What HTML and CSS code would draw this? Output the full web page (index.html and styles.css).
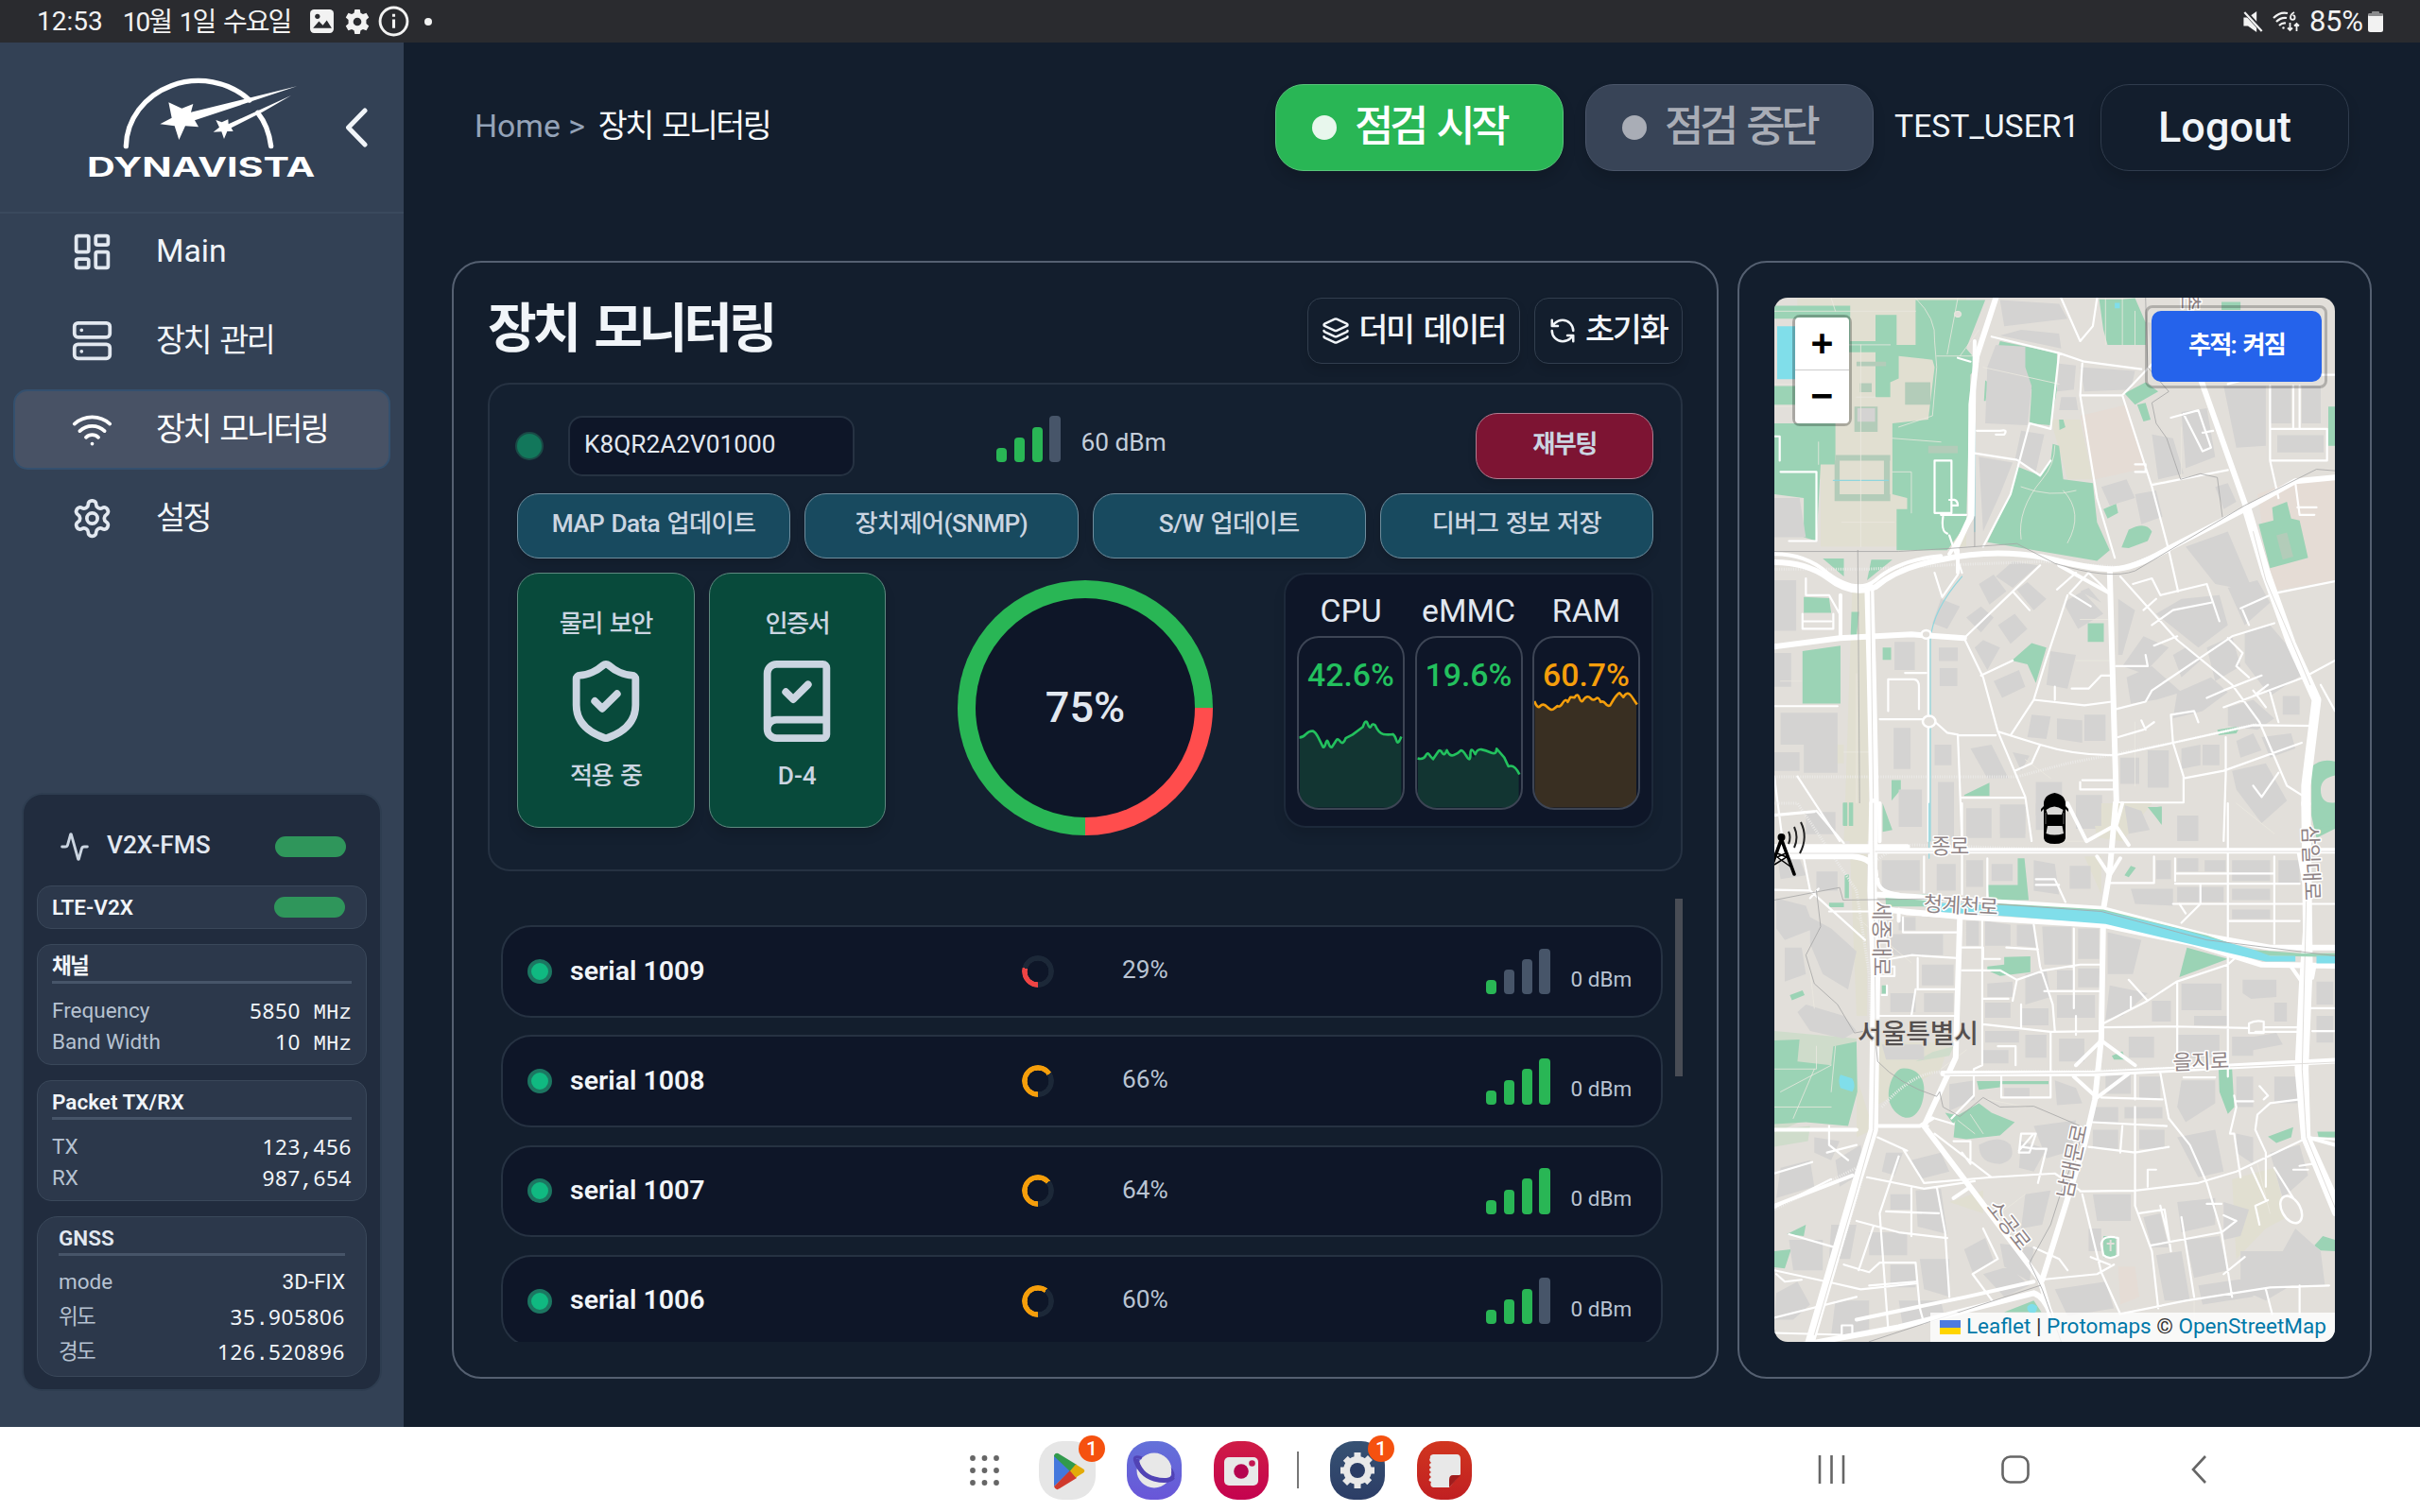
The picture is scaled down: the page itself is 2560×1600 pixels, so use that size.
FILE: index.html
```html
<!DOCTYPE html>
<html lang="ko">
<head>
<meta charset="utf-8">
<title>장치 모니터링</title>
<link rel="stylesheet" href="styles.css">
</head>
<body>
<div class="statusbar">
  <div class="status-left">
    <span class="clock">12:53</span>
    <span class="date ko">10월 1일 수요일</span>
    <svg class="st-pic" viewBox="0 0 26 26"><rect x="1" y="1" width="24" height="24" rx="4" fill="#f2f2f2"/><path d="M4 20l6-7 4 4 4-5 5 8z" fill="#2a2b2f"/><circle cx="8.500" cy="8" r="2.500" fill="#2a2b2f"/></svg>
    <svg class="st-gear" viewBox="0 0 24 24"><path fill="#f2f2f2" fill-rule="evenodd" d="M9.500 0h5l.7 3.400 2.300 1.300 3.300-1.200 2.500 4.300-2.600 2.300v3.800l2.600 2.300-2.500 4.300-3.300-1.200-2.300 1.300-.7 3.400h-5l-.7-3.400-2.300-1.300-3.300 1.200L.7 16.200l2.600-2.300v-3.800L.7 7.800l2.500-4.300 3.300 1.200 2.300-1.300zM12 8a4 4 0 1 0 0 8 4 4 0 0 0 0-8z"/></svg>
    <svg class="st-info" viewBox="0 0 32 32" fill="none" stroke="#f2f2f2"><circle cx="16" cy="16" r="14" stroke-width="2.800"/><path d="M16 14v9M16 8.500v3" stroke-width="3"/></svg>
    <span class="st-dot"></span>
  </div>
  <div class="status-right">
    <svg class="st-mute" viewBox="0 0 24 24"><path fill="#f2f2f2" d="M1 7h5l10-7v24L6 17H1z"/><path d="M2 0l21 23" stroke="#2a2b2f" stroke-width="5"/><path d="M2 1l20 22" stroke="#f2f2f2" stroke-width="2.400"/></svg>
    <svg class="st-wifi" viewBox="0 0 30 22" fill="none" stroke="#f2f2f2" stroke-width="2.200"><path d="M1 7Q8 0 16 2M4 11Q9 6 15 7M7 15Q10 12 14 12.500"/><circle cx="11.500" cy="17.500" r="1.200" fill="#f2f2f2" stroke="none"/><path d="M23 1q-4 2-4 5.500a2.300 2.300 0 1 0 2.300-2.300" stroke-width="1.800"/><path d="M18.500 12v8M16 17.500l2.500 2.500 2.500-2.500M25.500 21v-8M23 15.500l2.500-2.500 2.500 2.500" stroke-width="1.800"/></svg>
    <span class="battery-text">85%</span>
    <svg class="st-batt" viewBox="0 0 16 22"><rect x="4" y="0" width="8" height="4" rx="1" fill="#8a8b8d"/><rect x="0" y="2" width="16" height="20" rx="2.500" fill="#f2f2f2"/><rect x="0" y="2" width="16" height="3" rx="1.500" fill="#8a8b8d"/></svg>
  </div>
</div>

<div class="app">
  <aside class="sidebar">
    <div class="brand">
      <svg class="logo" viewBox="0 0 960 390">
        <path d="M160 254A230 212 0 0 1 552 108M578 148Q612 190 620 254" fill="none" stroke="#fff" stroke-width="16" stroke-linecap="round"/>
        <path d="M295 115L337 134 373 120 366 146 702 64 378 172 390 193 348 190 328 234 314 190 268 184 305 164z" fill="#fff"/>
        <path d="M445 171L464 178 484 169 485 184 684 93 592 146 494 196 500 207 481 207 471 231 463 208 437 209 456 194z" fill="#fff"/>
        <text class="logo-text" x="36" y="352" textLength="724" lengthAdjust="spacingAndGlyphs">DYNAVISTA</text>
      </svg>
      <svg class="chevron" viewBox="0 0 24 42"><path d="M21.500 3L4 21l17.500 18" fill="none" stroke="#f1f5f9" stroke-width="5" stroke-linecap="round" stroke-linejoin="round"/></svg>
    </div>
    <nav class="nav">
      <a class="nav-item"><svg class="icon" viewBox="0 0 24 24"><rect width="7" height="9" x="3" y="3" rx="1"/><rect width="7" height="5" x="14" y="3" rx="1"/><rect width="7" height="9" x="14" y="12" rx="1"/><rect width="7" height="5" x="3" y="16" rx="1"/></svg><span>Main</span></a>
      <a class="nav-item"><svg class="icon" viewBox="0 0 24 24"><rect width="20" height="8" x="2" y="2" rx="2"/><rect width="20" height="8" x="2" y="14" rx="2"/><path d="M6 6h.01M6 18h.01"/></svg><span class="ko">장치 관리</span></a>
      <a class="nav-item active"><svg class="icon" viewBox="0 0 24 24"><path d="M12 20h.01M2 8.820a15 15 0 0 1 20 0M5 12.859a10 10 0 0 1 14 0M8.500 16.429a5 5 0 0 1 7 0"/></svg><span class="ko">장치 모니터링</span></a>
      <a class="nav-item"><svg class="icon" viewBox="0 0 24 24"><path d="M12.220 2h-.44a2 2 0 0 0-2 2v.18a2 2 0 0 1-1 1.730l-.43.25a2 2 0 0 1-2 0l-.15-.08a2 2 0 0 0-2.730.73l-.22.38a2 2 0 0 0 .73 2.730l.15.1a2 2 0 0 1 1 1.720v.51a2 2 0 0 1-1 1.740l-.15.09a2 2 0 0 0-.73 2.730l.22.38a2 2 0 0 0 2.730.73l.15-.08a2 2 0 0 1 2 0l.43.25a2 2 0 0 1 1 1.730V20a2 2 0 0 0 2 2h.44a2 2 0 0 0 2-2v-.18a2 2 0 0 1 1-1.730l.43-.25a2 2 0 0 1 2 0l.15.08a2 2 0 0 0 2.730-.73l.22-.39a2 2 0 0 0-.73-2.730l-.15-.08a2 2 0 0 1-1-1.740v-.5a2 2 0 0 1 1-1.740l.15-.09a2 2 0 0 0 .73-2.730l-.22-.38a2 2 0 0 0-2.730-.73l-.15.08a2 2 0 0 1-2 0l-.43-.25a2 2 0 0 1-1-1.730V4a2 2 0 0 0-2-2z"/><circle cx="12" cy="12" r="3"/></svg><span class="ko">설정</span></a>
    </nav>
    <section class="fms">
      <div class="fms-head"><svg class="pulse" viewBox="0 0 24 24"><path d="M22 12h-2.480a2 2 0 0 0-1.930 1.460l-2.350 8.360a.25.25 0 0 1-.48 0L9.240 2.180a.25.25 0 0 0-.48 0l-2.350 8.360A2 2 0 0 1 4.490 12H2"/></svg><span>V2X-FMS</span><i class="pill"></i></div>
      <div class="fms-box lte"><span>LTE-V2X</span><i class="pill"></i></div>
      <div class="fms-box">
        <h4 class="ko">채널</h4>
        <div class="kv"><span>Frequency</span><b>5850<i> MHz</i></b></div>
        <div class="kv"><span>Band Width</span><b>10<i> MHz</i></b></div>
      </div>
      <div class="fms-box">
        <h4>Packet TX/RX</h4>
        <div class="kv"><span>TX</span><b>123<i>,</i>456</b></div>
        <div class="kv"><span>RX</span><b>987<i>,</i>654</b></div>
      </div>
      <div class="fms-box gnss">
        <h4>GNSS</h4>
        <div class="kv"><span>mode</span><em>3D-FIX</em></div>
        <div class="kv"><span class="ko">위도</span><b>35<i>.</i>905806</b></div>
        <div class="kv"><span class="ko">경도</span><b>126<i>.</i>520896</b></div>
      </div>
    </section>
  </aside>

  <main class="main">
    <header class="header">
      <div class="crumbs"><span>Home &gt;</span><strong class="ko">장치 모니터링</strong></div>
      <button class="hbtn start"><i></i><span class="ko">점검 시작</span></button>
      <button class="hbtn stop"><i></i><span class="ko">점검 중단</span></button>
      <span class="user">TEST_USER1</span>
      <button class="hbtn logout"><span>Logout</span></button>
    </header>

    <div class="content">
      <section class="card monitor">
        <div class="title-row">
          <h1 class="ko">장치 모니터링</h1>
          <button class="tool"><svg class="icon-s" viewBox="0 0 24 24"><path d="M12.830 2.180a2 2 0 0 0-1.660 0L2.600 6.080a1 1 0 0 0 0 1.830l8.580 3.910a2 2 0 0 0 1.660 0l8.580-3.900a1 1 0 0 0 0-1.830z"/><path d="M2 12a1 1 0 0 0 .58.910l8.600 3.910a2 2 0 0 0 1.650 0l8.580-3.900A1 1 0 0 0 22 12M2 17a1 1 0 0 0 .58.910l8.600 3.910a2 2 0 0 0 1.650 0l8.580-3.900A1 1 0 0 0 22 17"/></svg><span class="ko">더미 데이터</span></button>
          <button class="tool"><svg class="icon-s" viewBox="0 0 24 24"><path d="M21 12a9 9 0 0 0-9-9 9.750 9.750 0 0 0-6.740 2.740L3 8M3 3v5h5M3 12a9 9 0 0 0 9 9 9.750 9.750 0 0 0 6.740-2.740L21 16M16 16h5v5"/></svg><span class="ko">초기화</span></button>
        </div>

        <div class="device">
          <div class="dev-top">
            <i class="dev-dot"></i>
            <div class="dev-input">K8QR2A2V01000</div>
            <div class="bars"><i class="on"></i><i class="on"></i><i class="on"></i><i></i></div>
            <span class="dbm">60 dBm</span>
            <button class="btn reboot ko">재부팅</button>
          </div>
          <div class="dev-actions">
            <button class="btn ko">MAP Data 업데이트</button>
            <button class="btn ko">장치제어(SNMP)</button>
            <button class="btn ko">S/W 업데이트</button>
            <button class="btn ko">디버그 정보 저장</button>
          </div>
          <div class="dev-bottom">
            <div class="tile"><span class="ko">물리 보안</span><svg viewBox="0 0 24 24"><path d="M20 13c0 5-3.500 7.500-7.660 8.950a1 1 0 0 1-.67-.01C7.500 20.500 4 18 4 13V6a1 1 0 0 1 1-1c2 0 4.500-1.200 6.240-2.720a1.170 1.170 0 0 1 1.520 0C14.510 3.810 17 5 19 5a1 1 0 0 1 1 1z"/><path d="m9 12 2 2 4-4"/></svg><span class="ko">적용 중</span></div>
            <div class="tile"><span class="ko">인증서</span><svg viewBox="0 0 24 24"><path d="M4 19.500v-15A2.500 2.500 0 0 1 6.500 2H19a1 1 0 0 1 1 1v18a1 1 0 0 1-1 1H6.500a1 1 0 0 1 0-5H20"/><path d="m9 9.500 2 2 4-4"/></svg><span>D-4</span></div>
            <div class="ring"><div>75%</div></div>
            <div class="stats">
              <div class="stat"><h5>CPU</h5><div class="gauge green"><span>42.6%</span>
                <svg viewBox="204 960 314 432" preserveAspectRatio="none"><path class="fill" d="M212 1212L228 1207 240 1197 250 1196 262 1208 280 1236 292 1222 304 1238 322 1216 334 1224 344 1214 364 1206 394 1188 405 1170 416 1184 426 1175 440 1196 458 1204 484 1204 498 1222 508 1210V1386H212z"/><path class="line" d="M211 1212Q222 1212 230 1204T250 1196Q258 1199 266 1212L280 1236Q284 1238 288 1226T296 1226T306 1236L318 1220Q322 1212 330 1222T346 1214L366 1205 396 1186Q404 1164 410 1178T420 1184T432 1182Q442 1202 456 1204T484 1204Q490 1208 494 1220T508 1210"/></svg></div></div>
              <div class="stat"><h5>eMMC</h5><div class="gauge green"><span>19.6%</span>
                <svg viewBox="554 960 312 432" preserveAspectRatio="none"><path class="fill" d="M562 1264L580 1262 592 1252 602 1266 622 1246 642 1240 654 1256 666 1256 686 1246 702 1256 712 1252 724 1262 740 1242 776 1250 788 1238 826 1284 840 1284 854 1302V1386H562z"/><path class="line" d="M561 1264Q578 1268 584 1258T594 1254T606 1266L620 1248Q626 1240 632 1250T646 1244Q654 1260 666 1256T684 1246T702 1258T714 1254T728 1254Q734 1240 746 1242T774 1250T790 1240L812 1262 824 1284Q842 1278 856 1304"/></svg></div></div>
              <div class="stat"><h5>RAM</h5><div class="gauge amber"><span>60.7%</span>
                <svg viewBox="901 960 314 432" preserveAspectRatio="none"><path class="fill" d="M908 1124L920 1138 930 1130 960 1144 998 1126 1032 1108 1046 1122 1064 1112 1090 1124 1098 1116 1124 1136 1152 1098 1166 1110 1178 1104 1204 1130V1386H908z"/><path class="line" d="M907 1122Q916 1142 924 1134T944 1136T962 1142L974 1134Q982 1138 990 1126T1004 1124L1012 1112 1024 1113Q1032 1100 1038 1114T1050 1118Q1062 1106 1070 1114T1086 1116T1100 1124Q1108 1120 1114 1128T1128 1132Q1138 1116 1146 1108T1156 1102T1166 1112Q1178 1094 1190 1110L1206 1130"/></svg></div></div>
            </div>
          </div>
        </div>

        <div class="list-wrap">
          <div class="list">
            <div class="item"><i class="dot"></i><span class="serial">serial 1009</span><i class="mini red" style="--p:29%"></i><span class="pct">29%</span><div class="bars"><i class="on"></i><i></i><i></i><i></i></div><span class="zero">0 dBm</span></div>
            <div class="item"><i class="dot"></i><span class="serial">serial 1008</span><i class="mini" style="--p:66%"></i><span class="pct">66%</span><div class="bars"><i class="on"></i><i class="on"></i><i class="on"></i><i class="on"></i></div><span class="zero">0 dBm</span></div>
            <div class="item"><i class="dot"></i><span class="serial">serial 1007</span><i class="mini" style="--p:64%"></i><span class="pct">64%</span><div class="bars"><i class="on"></i><i class="on"></i><i class="on"></i><i class="on"></i></div><span class="zero">0 dBm</span></div>
            <div class="item"><i class="dot"></i><span class="serial">serial 1006</span><i class="mini" style="--p:60%"></i><span class="pct">60%</span><div class="bars"><i class="on"></i><i class="on"></i><i class="on"></i><i></i></div><span class="zero">0 dBm</span></div>
          </div>
          <div class="thumb"></div>
        </div>
      </section>

      <section class="card mapcard">
        <div class="map">
          <svg class="tiles" viewBox="0 0 593 1105">
            <!-- northern half -->
            <g transform="translate(-47 -45) scale(.4464 .3954)">
              <path class="sand" d="M250 115H560V780H215V600H160V115zM290 890H330V1568H270zM210 1310h60v50h-60zM760 440L830 440 860 600 800 600z"/>
              <path class="pink" d="M830 430L940 400 985 570 865 600zM1340 600H1434V870L1285 900 1250 640z"/>
              <path class="green" d="M105 135H285V230H345V160H395V240H440V120H605L560 250 590 290 570 320 560 720 515 790 395 790V680H420V650L385 640V450L470 440 485 300 480 280 400 270V330L380 340V380H345V260H270V330H155V170H105zM105 350H155V400H105zM105 450H250V560H215L205 765 175 755V650L105 640zM640 230L775 262V360L760 455 710 450 715 360 680 310 620 300zM605 335L612 340 606 390H602zM765 505L780 510 790 600 860 610 870 715 900 790 870 818 610 768 665 640 680 565 735 590 760 550zM875 118H930L960 115 985 180V240H895L885 200zM935 370L985 340 1015 365 960 400zM965 400L985 395 997 440 980 445zM928 782L945 735Q985 710 1000 740L990 765 945 784zM885 680L915 665 920 690 895 705zM1285 675L1320 660 1330 705 1350 710 1370 810 1280 838 1253 720 1288 710zM848 985H886V1035H848zM668 1085L715 1038 750 1050 725 1145 705 1095zM362 1050H382V1083H362zM175 915L235 918 240 957H175zM288 955H306L300 1020H286zM172 1060L262 1045V1200H172zM555 1445L615 1412V1447H555zM1155 1270L1210 1260 1200 1280 1158 1285zM1378 1370Q1400 1345 1434 1355V1392Q1400 1400 1400 1430 1400 1470 1434 1465V1535L1390 1560 1378 1500zM383 1405H405V1430L383 1460zM268 1465h10v60h-10zM282 1465h10v60h-10zM995 1480L1023 1475V1525zM335 815H385L325 870zM220 812H270V860zM780 440l10 0 5 20-14 8zM1418 405h16v105h-16zM1165 125h45v22h-45z"/>
              <path class="green2" d="M250 270H270V380H250zM300 285h70v12h-70zM295 405h55v68h-55zM250 535H380V550H250zM248 640H380V658H248zM365 550h14v100h-14zM248 550h12v100h-12zM308 343h28v24h-28zM415 340h60v60h-60zM470 510h70v20h-70zM1295 750l25-8 15 65-25 8z"/>
              <path class="bldg" d="M105 650H165L180 755H105zM630 240L700 245V300L715 350 705 455 605 450 610 300zM302 410h42v36h-42zM640 120L780 130 800 170 650 190zM690 200L780 210 785 250 640 215zM830 300L960 310 950 360 840 365zM1070 420L1130 410 1150 540 1080 570zM1280 350h50v100h-50zM1355 350h45v100h-45zM1297 482h110v46h-110zM1170 350h100v160l-70 5zM1000 480l50 10 25 95-60 15zM590 540L670 555 640 640 600 740zM1080 780L1180 740 1240 900 1150 880zM1150 620l30-10 20 50-30 20zM880 330h60v30h-60zM690 470l55 10-20 100-50-30zM780 290l40 5-5 65-40 5zM785 380l35 0 5 35-45 0zM990 180l100 10-40 60-50 20zM880 620l60-20 20 50-60 20zM960 640l50-10 15 70-50 20zM105 870h52v135h-52zM105 1065h40v90h-40zM120 1225H255V1385H175V1310H120zM390 1035h48v75h-48zM495 1050h45v36h-45zM497 1105h42v48h-42zM388 1265h40v110h-40zM493 1410h38v150h-38zM485 1310h40v55h-40zM590 880l35-25 30 45-40 35zM500 920l45 20-30 60-35-15zM560 970l35-30 30 30-30 40zM680 895l25-20 45 45-30 30zM635 990l40-30 30 40-40 40zM600 1030l40 20-30 60-30-60zM670 820l60 10-60 60-40-30zM625 1140l60-30 15 45-55 30zM760 1060l60 10-20 90-50-10zM715 1230l45 5-10 60-45-5zM775 1240l60 5v60l-60-10zM840 1230h50v70h-50zM790 930l45-30 50 60-60 40zM830 900l20-10 30 40zM920 920l40 30-30 120-10 0zM980 1020l60 30-60 70-50-20zM1010 960l60-40 90-10 20 80-70 60zM1050 1070l30-20 40 30-50 50zM1130 1050l60-30 20 80-60 40zM1180 890l70-20 30 60-60 60zM1220 1010l60-20 60 80 20 50-80 60-60-90zM940 1130l60-30 70 70-60 20-60 10zM1060 1170l80-40 40 40-60 50-70 20zM1180 1210l60-20 50 50-40 30-70-10zM1310 1180h40v50h-40zM925 1345h45v70h-45zM990 1325h50v100h-50zM1070 1320l45-10v55l-45 10zM1120 1310l40 0 0 55h-40zM1200 1300l40-20 20 45-50 20zM1260 1290l70-10 10 40-60 25zM1190 1380l80-20 50 100-60 60-60-90zM570 1320l50-10 40 90h-50zM560 1480h60v80h-60zM640 1470h60v90h-60zM725 1410h62v90h-62zM820 1445h62v90h-62zM1060 1500h50v68h-50zM400 1430h55v100h-55zM180 1490h70v60h-70zM105 1330h60v50h-60zM670 1330l40 10-20 40z"/>
              <path class="rail" d="M105 1396H680L800 1360 1050 1305 1250 1255M105 840H330L500 830 740 820 920 835"/>
              <path class="canal" d="M580 450V740M550 860Q480 950 475 1030V1568M245 603H375M1300 960L1325 1035"/>
              <path class="r1" d="M105 150L440 150M240 115L250 150M440 115Q490 170 485 230L490 300 480 430 400 460M490 270H580M105 345H155M105 405H270M385 490L500 500M310 240V780M270 240H380M540 115L515 265M545 270L590 200M300 380H345M385 580H430L430 690M265 715H390M210 500V560M600 300L780 345M690 620Q760 650 820 630M690 760Q680 680 740 600 770 560 770 510M790 630Q840 690 800 770M890 115V240M930 115V240M960 150V240M960 1250V1420M1070 460V590M1000 610L1060 600M120 1140H170M700 1350L760 1400M820 1085H900M830 975H895M300 1120V1568M270 1330H330"/>
              <path class="r2" d="M620 218L780 262 840 285 975 305M780 262L760 465 710 450 665 640 600 780M785 115L830 230 860 190 870 115M830 375H930L985 310 1100 170M830 375L835 290M930 375L1000 620 1040 790 1062 900M830 375L870 650 912 810M580 530L680 548 735 590 760 550M585 470H640Q660 465 650 480H630M1000 615L1180 575M1280 350V550H1415V465H1280M1280 470V550L1300 650M1335 350V465M1350 350V465M1340 610L1350 695H1385M1345 675H1390M120 580H205V765H140M105 485H118V550M485 550H525V690H485zM500 695H560M505 700Q500 740 515 745M520 655Q540 650 540 670H525M180 865V910H235L260 960 262 1025M172 960V1000H245V960M175 980H240M520 750L550 850M485 850L503 915 540 855M670 900L710 950M735 830L670 900 555 1025M900 905L850 850 805 905 855 940M800 910L750 1080 720 1190 665 1285M720 1190L840 1205 905 1195M770 1190V1155M810 1160H850L880 1125H905M555 1025L600 1130 635 1275 700 1450 715 1568M595 1125L670 1085M540 1285H630M355 1242H458M487 1250L515 1278 540 1283 550 1568M470 1025V1232M470 1265V1568M415 1118H465M375 1220V1135H435Q448 1135 448 1155V1215M635 1275L735 1310Q820 1340 915 1338L1050 1305 1240 1258 1390 1260M675 1380L715 1360 735 1310M550 1452H700M105 1207H255M920 1290L980 1270 1005 1250M975 1245L985 1270M915 1215L985 1195 1000 1165 1190 1020 1290 985M915 1100H990L985 1070M925 860L1060 1030 1190 1150 1255 1250 1320 1420 1355 1445M955 880L1000 865 1020 910 1130 880 1160 980M1000 990L1050 950 1140 930M1005 1045L1060 1020M980 950L1010 920M1215 950L1230 990M1210 945L1290 905 1434 873M1180 1025L1215 1065 1200 1100 1230 1130M1130 1185L1170 1165 1260 1125M1170 1210L1360 1130 1434 1085M1240 1165L1270 1210M1240 1180L1275 1150M1280 1170L1300 1250M1050 1305L1075 1395V1465H920M1050 1305L1045 1230 1100 1220 1110 1250M1075 1400L1170 1380 1355 1305M1175 1290V1390L1170 1568M1240 1420L1260 1450 1300 1385M1045 435L1110 415 1140 515 1120 525 1075 425M1120 475L1145 470M960 560H985V580H960M1180 345L1230 330M1400 1150L1434 1220M105 1395L125 1568M160 1395L260 1568M105 1500L200 1490M830 1410V1430H910V1405H835M775 895L800 870 820 850M540 275L570 285M1434 320H1280"/>
              <path class="r3" d="M580 230L575 700 520 800M780 830L900 905M105 800Q180 800 230 850 300 910 345 870 400 815 500 805M540 790V850M1225 690L1240 760M262 910V1025M940 835L1040 790"/>
              <path class="r4" d="M630 115L585 270 572 400 570 700 535 785M105 822Q180 822 230 862 290 915 345 888 400 835 500 815 620 785 740 808 860 842 910 840 960 838 1040 785L1220 680 1340 605 1434 595M105 1048L260 1025 430 1015 555 1025M900 840L905 1050 916 1470M1115 330L1225 680 1280 880"/>
              <path class="r5" d="M330 890L335 1100 342 1470M1225 680L1270 850 1330 1040 1390 1190 1365 1420V1470"/>
              <circle cx="465" cy="1015" r="11" class="rnd"/><circle cx="472" cy="1248" r="15" class="rnd"/><circle cx="540" cy="158" r="8" class="rnd r-s"/>
              <path class="gap" d="M1240 740L1270 870 1330 1030 1375 1150M333 900L340 1470"/>
              <path class="bound" d="M105 793H400L520 785 680 772 770 825Q900 870 960 845L1220 670 1390 573 1434 577M303 790L308 1568M985 115L990 300 1040 365 1000 395 1010 450 1035 490 1068 600 1115 585 1155 595 1167 700M580 700V780"/>
              <path class="water" d="M112 190H155V332H112zM912 128h12v14h-12z"/>
            </g>
            <!-- southern half -->
            <g transform="translate(-47 535) scale(.4464 .4018)">
              <path class="sand" d="M280 0H325V560H300zM855 0H1000L930 100 870 90zM840 140H880V240zM350 630H520L500 700 340 800zM300 720L340 860 300 880zM1190 990L1290 960 1320 1090 1270 1120 1200 1200zM520 1050L600 1020 600 1080z"/>
              <path class="pink" d="M920 1220H960L970 1300 925 1320z"/>
              <path class="green3" d="M105 600L300 620V770L105 870zM480 655L530 640 520 665 440 680zM105 860L190 850 185 890 105 905z"/>
              <path class="green" d="M105 625L165 622 160 680 240 690 245 640 300 628 302 760 280 850 180 840 105 845zM410 698C395 698 376 730 376 770 376 800 400 828 420 828 445 828 461 790 460 750 459 720 440 696 410 698zM368 240H480L470 272H370zM610 215H682V145H698L708 255H615zM610 430L650 425V405L712 403V445L640 455 610 440zM1083 380L1180 410 1065 458zM1158 700H1190L1195 800 1180 818 1160 760zM1275 878L1335 853 1330 880 1295 895zM1392 865H1434V880H1395zM585 732H755V740H640V748L590 755zM535 825L590 790 620 815 675 840 640 875 560 885 530 880zM510 815L540 822 530 845zM1385 1165L1405 1140 1434 1150V1180L1400 1178zM105 1180L145 1175 130 1225 105 1222zM135 1135L180 1110 175 1140zM650 1340L720 1310 738 1340zM885 1140H915V1195H885zM935 190L950 165 962 170 945 195zM360 480h12v22h-12zM362 0L385 70 362 75zM268 0h10v60h-10zM282 0h10v60h-10zM272 188h10v62h-10zM235 262h35v12h-35zM142 505l30-12 5 12-30 14zM1380 20L1434 0V60L1385 65zM990 10h33v45zM905 665l25-12 8 22h-28z"/>
              <path class="bldg" d="M205 180h50v50h-50zM110 120l50 10 20 60-60 10zM360 150h90v80h-90zM490 160h45v70h-45zM560 150h40v70h-40zM620 160h50v45h-50zM720 150l50 10 10 80-60-10zM805 165h50v60h-50zM640 10h60v70h-60zM725 0h62v70h-62zM820 0h60v60h-60zM935 5l40 15 20 50-50 10zM1010 150h35v50h-35zM1060 145h50v35h-50zM1125 150h50v30h-50zM1190 150h90v55h-90zM1300 150h50v60h-50zM950 225h100v45l-90-5zM1060 220h110v40h-110zM1190 225h90v30h-90zM1190 280h90v25h-90zM400 300h40v35h-40zM380 345h125v55h-125zM560 310h30v65h-30zM605 310l60 10v55h-60zM680 320l40 0 10 60-50-5zM740 325h70v100h-65zM825 330h50v80h-50zM895 340l80 20-20 90h-60zM190 300l50 30 60 60-20 100-60-40-30-80zM130 380l40 0 10 70-50 20zM110 250l70 20 20 60-70 30-20-30zM180 530l30 10 60 20 30 40-30 20-80-20-30-50zM455 425h75v55h-75zM380 500h60v50h-60zM460 500h70v50h-70zM610 475l60-5v40h-60zM605 525h60v40h-60zM690 540h65v45h-65zM700 450l50-10 10 70-60 20zM775 440h40v50h-40zM825 435h50v50h-50zM775 505l90 0v60h-90zM900 480l90 20-60 60-40 10zM1070 475h95v70h-95zM1215 465l80 0v45l-60 5-20-15zM1290 525h30v50h-30zM1000 520h45v55h-45zM1100 560h80v25h-80zM1215 620l80-15 15 30-70 15zM1390 470h40v60h-40zM1390 560h40v70h-40zM605 600h80v30h-80zM600 650h60v35h-60zM700 610h50v60h-50zM780 620h60v60h-60zM945 615h60v55h-60zM1060 610h100v60h-100zM1190 615h50v50h-50zM360 635h100v40h-90zM520 740l60-10v50l-60 30zM650 750l60 0 0 25h-60zM770 730l50 20 15 40-60 5zM890 715h60v50h-60zM970 720h50v60h-50zM1070 730h80v60l-70 50-20-40zM1200 720h40v80h-40zM1290 720h60v70h-60zM590 900Q640 870 665 900 680 940 640 950 590 950 590 900zM720 850l100-15-10 80-60 20zM690 890l60 20-30 60-35-10zM860 800h60v40h-60zM935 800h90v30h-90zM860 860h60v50h-60zM970 860h60v50h-60zM1060 880l90-20 20 110-60 15zM1200 870l40 10v70l-40-30zM1280 920l70-20 20 80-60 60zM370 920l40 0-20 60-30-10zM430 940l70-20 20 50-70 20zM250 940l60-40 10 70-60 40zM200 880l60 10-20 50-40-20zM120 960l70-20 10 70-90 30zM140 1150h80v80h-70zM240 1110l60 0-15 90h-50zM380 1030l50 0v40h-50zM440 1020l60-5 15 120-70-20zM330 1130h90v60h-90zM380 1215h60v60h-60zM450 1200l70 0v100l-60-20zM555 1175l50-30 20 60-50 30zM700 1030l60-10-20 90-50 10zM640 1160l80 10-10 90-60-40zM600 1240l60-20 50 50-60 30zM860 1030h90v70h-80zM850 1120h30v60h-30zM980 1090l40-10 20 90h-40zM1060 1050l90-10v70l-80 20zM1080 1150l80-10 20 90-80 20zM1010 1190l60-10 20 130h-60zM1170 1050l60 20-20 70-40 10zM1210 1180l100 0 30-60 60 60 10 90-80 0-60 40-60-30zM770 1280l120-20 20 70-110 20zM110 1290l50-30 30 60-40 40-45 0zM250 1310h80v90h-90zM400 1310h100l10 50-100 20zM1110 1270l120-20 10 50-120 20z"/>
              <path class="rail" d="M105 0L160 0 300 230 330 450 335 650M345 860L300 1040 200 1400M330 170Q380 110 440 110L860 125H1434M500 708L870 705 1434 680M360 800Q440 700 510 708M105 1070L300 960"/>
              <path class="canal" d="M472 0V145"/>
              <path class="r1" d="M190 440L200 540M205 640V700H105M240 690L120 760M150 830L200 700M105 800H240M250 640L240 760M560 650L500 700M640 1080L700 1030M760 100H850M1060 470V660M1200 0L1290 80M1280 1080L1250 950M1100 1420V1300M300 300L430 420M610 780L700 800M540 835L580 870M570 820L600 870"/>
              <path class="r2" d="M105 228L190 230 320 360M190 250L210 225M235 285H330M175 145L190 230M205 20L270 105M105 30L205 20M460 140V235M550 0V240M610 145V270M725 200H770L795 260M725 215H780M550 380H600L600 410 640 410M598 310V690L578 700V770L525 830M720 320L735 430 765 530 770 600M815 330V540M655 380L730 385M550 440H640L680 465 745 440 830 425H880M680 465L670 520M600 515H660M745 495H880M690 530V590M600 582L760 602 880 600M760 602V775H643V720M635 640H677V690M410 300V340H430L545 340M380 410L430 400 540 408M445 408V490H540M440 490L430 560M345 560H540M360 505H372V480M355 455H390V430H380M885 580L990 520 1058 470 1180 425 1195 410M945 465L990 520M950 540V510M1005 140V210H900M1055 145V205M1055 185H1290M1055 212H1350M1115 215V265L1070 315M1050 265H1434M1065 265L1080 290M1290 140V370M1180 0V720M1180 310H1350M1060 470V660M885 590L1055 588 1230 592M1230 580Q1245 570 1265 575V605H1230zM1265 590H1345M1245 602H1345M1375 540H1434M1380 600H1434M1075 722H1150M960 710V780M880 775L1025 780M1020 710L1040 830 1090 900 1130 1000 1165 1130 1190 1300M850 905L960 920 1040 905M930 850L925 920M860 840L1035 850M960 800V1060L1000 1180 1015 1330M830 1022L960 1020 1110 1000 1200 970 1370 880 1434 885M1270 1010V920L1245 860 1250 820 1280 790 1350 780M1195 770L1200 800 1185 870H1195L1210 985M1235 960L1270 1045M1255 1110L1245 1060 1275 1045M1255 745L1275 770 1265 780M1200 785H1240M970 1080L1030 1070 1045 1180M995 1165L1165 1130 1200 1100M1070 1090L1100 1300M1165 1055H1130M1020 1060L1040 1150M835 1030L880 1235 925 1345M735 1255L870 1240 910 1215M855 1195L900 1215M990 1010V965H1010M1290 960L1335 1040M1335 965H1370M350 850H470M470 825L530 845M485 870L620 985 770 975 830 1020M550 920L570 950V890H530M410 910L460 1000 620 985M420 915L350 880M325 985L460 1015 580 995M430 1010V1140M490 1010L510 1130 520 1300M370 1075L495 1080M300 1100L400 1130 515 1145M400 930L355 1080 375 1385M270 1215L330 1235 355 1210H440L450 1330 460 1370M330 1270L440 1260M105 1230L250 1265 310 1280 440 1265M105 975L195 945M105 1065L240 990M235 850V900L280 940M230 920L300 900M250 1170L140 1135M340 1115L305 1230M600 1120L635 1200 575 1240 625 1315M720 1170L780 1200 800 1230M640 1080L700 1160M105 1395L265 1400V1375H290V1395M105 1355L300 1300M730 1000L750 910H725L690 905 685 915 720 870M690 870L685 920 710 920 725 870zM1170 1240L1220 1195M925 1345L1080 1310 1280 1275 1420 1270M1270 1280L1285 1345M1350 1270V1345M1200 1100L1170 1085M110 1240L130 1260 170 1255M880 1160Q885 1135 920 1145V1190Q900 1205 885 1190zM1350 955L1380 950M820 560V610"/>
              <path class="r3" d="M355 0V100M350 200Q350 235 400 240M800 0L845 100 910 60M930 0L915 60 945 110M870 140L900 190 925 145M350 270L420 290 560 300M400 280V310M820 690L880 625 960 690M815 720L870 775 945 712M345 850H450L480 830M300 1360L560 1300 720 1260M1330 430L1355 470M1380 460L1385 430M1370 880L1434 900M105 860L300 860M530 1040L570 1010M105 1060L290 980"/>
              <path class="r4" d="M105 125H1434M105 140H290Q345 145 345 190M105 115H420M914 0L900 180 885 280 880 620 865 780 840 900 740 1255M545 300L535 670 460 850 735 1255 760 1350M345 240L560 255 880 278 1130 350 1280 380H1434M345 278L560 300 890 322 1100 370 1260 425 1434 428M505 712H870L1434 678M1350 130L1370 250 1355 480 1345 700 1360 880 1434 1080M105 1440L400 1380 720 1290Q745 1300 760 1345"/>
              <path class="r5" d="M341 0L337 230 345 450 340 860 300 1000 190 1418M1365 0L1370 430 1360 700 1365 880 1434 1050"/>
              <path class="gap" d="M340 0V100L345 560 340 860 300 1020 200 1400M345 127H1434M510 714L860 710 1434 682M1366 250L1356 700 1366 880 1434 1065M105 132H330"/>
              <path class="green" d="M635 264L885 280 1130 348 1230 385 1350 395H1434V405L1280 402 1050 350 880 300 635 275z"/>
              <path class="water" d="M480 262L720 272 885 284 1060 330 1240 385 1280 402H1340V417H1270L1110 376 890 318 640 296 480 285zM1390 402H1434V422H1390zM262 715L290 725Q300 745 290 760L262 750Q255 730 262 715zM705 1325Q715 1312 728 1325 728 1345 715 1343 702 1338 705 1325z"/>
              <path class="bound" d="M105 255L260 222 268 255 460 252 880 285 1130 360 1434 402M205 230L215 325 180 400 200 475 255 530 295 605 320 600M345 620L350 680Q400 740 490 772L497 760 505 800 545 825 600 775 640 800 720 798 830 850 835 900M830 890L780 1040 760 1110 710 1210 740 1280 785 1418M330 1418L735 1270"/>
              <ellipse cx="1330" cy="1070" rx="22" ry="38" transform="rotate(-25 1330 1070)" class="track"/>
              <path d="M893 1160h18M902 1150v30" stroke="#e2dfda" stroke-width="2"/>
            </g>
            <g class="labels">
              <text transform="translate(441 4) rotate(90)" y="8">촌</text>
              <text x="186" y="588">종로</text>
              <text transform="translate(197 643) rotate(3)" y="8">청계천로</text>
              <text transform="translate(114 678) rotate(90)" y="8">세종대로</text>
              <text transform="translate(568 598) rotate(88)" y="8">삼일대로</text>
              <text transform="translate(451 808) rotate(-2)" y="8">을지로</text>
              <text transform="translate(315 914) rotate(-78)" y="8">남대문로</text>
              <text transform="translate(248 981) rotate(52)" y="8">소공로</text>
              <text class="city" x="152" y="789">서울특별시</text>
            </g>
            <g transform="translate(282 524)">
              <path d="M3 14Q2 2 14.500 0 27 2 26 14V48Q25 54 14.500 54 4 54 3 48zM3 17l-3 3v-3l3-3zM26 17l3 3v-3l-3-3z" fill="#000"/>
              <path d="M5.500 18Q14 11 23.500 18L22 23H7zM7 35H22.500L24 43Q14 46 5.500 43z" fill="#d9d8d6"/>
              <path d="M5 21v12M24 21v12" stroke="#777" stroke-width=".8"/>
            </g>
            <g fill="none" stroke="#000">
              <circle cx="7.500" cy="571" r="4" fill="#000" stroke="none"/>
              <path d="M7.500 573L21 610M7.500 573L-6 610" stroke-width="3.600" stroke-linecap="round"/>
              <path d="M3 588L13 592 0 600M12 588L3 592 17 602" stroke-width="1.500"/>
              <path d="M15 565Q18 571 15 578M21 560Q26 571 21 582M28 555Q36 571 27 588" stroke-width="2" stroke="#222"/>
            </g>
          </svg>
          <div class="zoom"><span>+</span><span>−</span></div>
          <div class="follow"><button class="ko">추적: 켜짐</button></div>
          <div class="attrib"><i class="flag"></i><a>Leaflet</a> | <a>Protomaps</a> © <a>OpenStreetMap</a></div>
        </div>
      </section>
    </div>
  </main>
</div>

<footer class="taskbar">
  <div class="dock">
    <svg class="grid" viewBox="0 0 32 32" fill="#666"><circle cx="3" cy="3" r="2.900"/><circle cx="15.500" cy="3" r="2.900"/><circle cx="28" cy="3" r="2.900"/><circle cx="3" cy="16" r="2.900"/><circle cx="15.500" cy="16" r="2.900"/><circle cx="28" cy="16" r="2.900"/><circle cx="3" cy="29" r="2.900"/><circle cx="15.500" cy="29" r="2.900"/><circle cx="28" cy="29" r="2.900"/></svg>
    <div class="appicon play"><svg viewBox="0 0 60 62"><path d="M16 15v33l18-17z" fill="#4478dd"/><path d="M16 15q2-4 6-1l18 11-7 7-17-16z" fill="#319a4c"/><path d="M16 48q2 5 6 2l18-11-7-8z" fill="#d03a2d"/><path d="M33 31.500l6-7 8 5q2.500 2 0 4l-8 5z" fill="#e3ab08"/></svg><b class="badge">1</b></div>
    <div class="appicon web"><svg viewBox="0 0 58 62"><circle cx="29" cy="31" r="18.500" fill="#e8e8e8"/><path d="M10 19Q14 36 29 40T49 38" fill="none" stroke="#5143b5" stroke-width="5"/><path d="M16 18Q6 14 9 22 14 36 30 40 50 45 49 36 49 32 45 28" fill="none" stroke="#5143b5" stroke-width="3"/><path d="M16 18A18.500 18.500 0 0 1 47 34Q30 36 14 24z" fill="#e8e8e8"/></svg></div>
    <div class="appicon cam"><svg viewBox="0 0 58 62"><rect x="11" y="17" width="36" height="30" rx="5" fill="#e8e8e8"/><circle cx="29" cy="32" r="7.800" fill="#b5044f"/><circle cx="40.500" cy="23.500" r="3.300" fill="#c31650"/></svg></div>
    <span class="sep"></span>
    <div class="appicon set"><svg viewBox="0 0 58 62"><g fill="#e8e8e8"><circle cx="29" cy="31" r="15"/><path d="M25.500 12h7v38h-7zM11 27.500h36v7H11z"/><path d="M25.500 12h7v38h-7zM11 27.500h36v7H11z" transform="rotate(45 29 31)"/></g><circle cx="29" cy="31" r="8" fill="#2a3c64"/></svg><b class="badge">1</b></div>
    <div class="appicon note"><svg viewBox="0 0 58 62"><path d="M17 14H42Q46 14 46 19V35L34 49H17Q13 48 15 43 10 42 15 38 11 35 15 33 11 30 15 28 11 25 15 23 12 20 14 18 13 15 17 14z" fill="#e8e8e8"/><path d="M46 36H38Q34 36 34 41V49z" fill="#a01c1c"/></svg></div>
  </div>
  <div class="sysnav">
    <svg class="recents" viewBox="0 0 30 30"><path d="M2 0v30M14.500 0v30M27 0v30" stroke="#666" stroke-width="2.600"/></svg>
    <svg class="home" viewBox="0 0 30 30"><rect x="1.500" y="1.500" width="27" height="27" rx="8" fill="none" stroke="#666" stroke-width="2.600"/></svg>
    <svg class="back" viewBox="0 0 16 30"><path d="M15 1L2 15l13 14" fill="none" stroke="#666" stroke-width="2.600"/></svg>
  </div>
</footer>
</body>
</html>
```

FILE: styles.css
```css
* { box-sizing: border-box; }
body {
  margin: 0;
  width: 2560px;
  height: 1600px;
  overflow: hidden;
  display: flex;
  flex-direction: column;
  background: #131e2d;
  color: #f1f5f9;
  font-family: Roboto, "Noto Sans CJK KR", sans-serif;
  font-size: 33.75px;
  line-height: 1.2;
}
i, em { font-style: normal; }
h1, h4, h5 { margin: 0; }
button { font: inherit; color: inherit; background: none; border: 0; padding: 0; margin: 0; }
.ko { letter-spacing: -0.075em; word-spacing: 0.13em; }
svg { display: block; flex: none; }

/* system status bar */
.statusbar { height: 45px; flex: none; background: #2a2b2f; color: #f2f2f2; font-size: 28px; display: flex; justify-content: space-between; align-items: center; padding: 0 39px 0 39px; }
.status-left, .status-right { display: flex; align-items: center; }
.date { margin-left: 21px; width: 178px; white-space: nowrap; letter-spacing: -0.07em; position: relative; top: 1px; }
.st-pic { width: 27px; height: 27px; margin-left: 19px; }
.st-gear { width: 26px; height: 26px; margin-left: 11px; }
.st-info { width: 33px; height: 33px; margin-left: 9px; }
.st-dot { width: 8px; height: 8px; border-radius: 50%; background: #f2f2f2; margin-left: 16px; }
.st-mute { width: 23px; height: 22px; }
.st-wifi { width: 30px; height: 22px; margin-left: 9px; }
.battery-text { font-size: 31px; margin-left: 9px; width: 57px; letter-spacing: -0.3px; }
.st-batt { width: 16px; height: 22px; margin-left: 5px; }

.app { display: flex; height: 1465px; flex: none; }

/* sidebar */
.sidebar { width: 427px; background: #334155; display: flex; flex-direction: column; flex: none; }
.brand { height: 181px; border-bottom: 2px solid #3a495d; display: flex; padding: 25px 0 0 80px; }
.logo { width: 320px; height: 130px; margin-right: -36px; }
.logo-text { font: 700 84px Inter, sans-serif; fill: #fff; }
.chevron { width: 25px; height: 42px; margin-top: 44px; }
.nav { display: flex; flex-direction: column; gap: 9px; padding: 0 14px; margin-top: -2px; }
.nav-item { height: 85px; display: flex; align-items: center; padding-left: 61px; border-radius: 15px; border: 2px solid transparent; color: #f1f5f9; }
.nav-item.active { background: #485265; border-color: #34506e; color: #fff; }
.nav-item span { margin-left: 45px; }
.nav-item span.ko { position: relative; top: 1px; }
.icon { width: 45px; height: 45px; fill: none; stroke: #e2e8f0; stroke-width: 2; stroke-linecap: round; stroke-linejoin: round; }
.active .icon { stroke: #fff; }
.nav-item .icon { margin-left: -2px; }

.fms { margin: auto 23px 38px 23px; height: 633px; background: #212c3e; border: 2px solid #2e3d50; border-radius: 22px; padding: 14px; font-size: 22.5px; display: flex; flex-direction: column; }
.fms-head { height: 82px; flex: none; display: flex; align-items: center; padding: 0 22px 0 21px; font-size: 26.25px; font-weight: 500; color: #e2e8f0; }
.fms-head span { margin-left: 15px; position: relative; top: -1px; }
.pulse { width: 38px; height: 32px; fill: none; stroke: #cbd5e1; stroke-width: 2.200; stroke-linecap: round; stroke-linejoin: round; }
.pill { width: 75px; height: 22px; border-radius: 11px; background: #2f965b; margin-left: auto; }
.fms-box { background: #2c384b; border: 1px solid #3a485a; border-radius: 15px; padding: 8px 15px; margin-bottom: 15.500px; height: 128.500px; flex: none; }
.fms-box.lte { height: 46px; display: flex; align-items: center; padding-right: 22px; font-weight: 600; }
.fms-box h4 { font-size: 22.5px; font-weight: 600; line-height: 29px; height: 33px; border-bottom: 3px solid #475569; margin-bottom: 12.500px; white-space: nowrap; }
.kv { display: flex; justify-content: space-between; height: 33px; line-height: 33px; color: #b6c2d1; }
.kv b, .kv em { color: #f1f5f9; font-weight: 400; white-space: pre; }
.kv b { font-family: "Noto Sans", sans-serif; letter-spacing: 0.63px; font-size: 22.5px; }
.kv b i { font-family: "Liberation Mono", monospace; letter-spacing: 0; }
.fms-box.gnss { height: 170px; border-radius: 22px; padding: 8px 22px; margin-bottom: 0; }
.gnss h4 { margin-bottom: 9.500px; color: #e2e8f0; }
.gnss .kv { height: 37px; line-height: 37px; }

/* header */
.main { flex: 1; display: flex; flex-direction: column; padding: 44px 51px 0 51px; }
.header { height: 92px; display: flex; align-items: center; padding: 0 24px; flex: none; margin-bottom: 95px; }
.crumbs { margin-right: auto; display: flex; gap: 14px; color: #94a3b8; position: relative; top: -1px; }
.crumbs strong { font-weight: 400; color: #f8fafc; }
.hbtn { height: 92px; border-radius: 30px; font-size: 45px; font-weight: 500; display: flex; align-items: center; justify-content: center; box-shadow: 0 8px 14px rgba(0,0,0,.14); border: 1.500px solid; }
.hbtn i { width: 26px; height: 26px; border-radius: 50%; margin-right: 19px; }
.start, .stop { justify-content: flex-start; padding-left: 38px; width: 305px; white-space: nowrap; }
.hbtn .ko { letter-spacing: -0.1em; }
.start { background: #29b655; border-color: #58c67b; color: #fff; margin-right: 23px; }
.start i { background: #e8f7ed; }
.stop { background: #384457; border-color: #4b566a; color: #a9adb6; margin-right: 22px; }
.stop i { background: #a9adb6; }
.user { width: 195px; white-space: nowrap; position: relative; top: -1px; margin-right: 23px; }
.logout { width: 263px; border-color: #303c4d; }

/* cards */
.content { display: flex; gap: 20px; height: 1183px; }
.card { border: 2px solid #556071; border-radius: 31px; flex: none; }
.monitor { width: 1340px; padding: 37px 36px; display: flex; flex-direction: column; }
.mapcard { width: 671px; padding: 37px; }
.title-row { height: 70px; display: flex; align-items: center; gap: 15px; padding-right: 0; margin-bottom: 20px; }
h1 { font-size: 56.25px; font-weight: 700; line-height: 70px; margin-right: auto; position: relative; top: -2px; }
.tool { height: 70px; border: 1.500px solid #323e4e; border-radius: 15px; padding: 0 15px 0 14px; display: flex; align-items: center; gap: 9px; font-weight: 500; box-shadow: 0 6px 10px rgba(0,0,0,.12); white-space: nowrap; }
.tool:last-child { width: 157px; }
.tool .ko { letter-spacing: -0.065em; }
.icon-s { width: 30px; height: 30px; fill: none; stroke: #f1f5f9; stroke-width: 2; stroke-linecap: round; stroke-linejoin: round; }
.device { height: 517px; flex: none; border: 2px solid #263242; border-radius: 23px; background: #142030; padding: 30px 29px; display: flex; flex-direction: column; gap: 15px; font-size: 26.25px; }
.dev-top { height: 70px; display: flex; align-items: center; }
.dev-dot { width: 30px; height: 30px; border-radius: 50%; background: #12775b; border: 2px solid #1a4a46; margin-left: -2px; }
.dev-input { width: 303px; height: 64px; margin-left: 26px; border: 2px solid #263242; border-radius: 15px; background: #0e1628; padding-left: 15px; line-height: 56px; color: #e2e8f0; }
.bars { display: flex; align-items: flex-end; gap: 7.500px; height: 49px; }
.bars i { width: 11.250px; height: 15px; border-radius: 4px; background: #475569; }
.bars i:nth-child(2) { height: 26px; }
.bars i:nth-child(3) { height: 37.500px; }
.bars i:nth-child(4) { height: 48.750px; }
.bars i.on { background: #29b655; }
.dev-top .bars { margin: -15px 0 0 150px; }
.dbm { margin: -7px auto 0 22px; color: #c4cedb; }
.btn { height: 69px; border: 1.500px solid #6f8d9d; border-radius: 23px; background: #184a5f; color: #cbd5e1; font-weight: 500; flex: 1; padding-bottom: 3px; letter-spacing: -0.025em; word-spacing: 0.06em; box-shadow: 0 5px 9px rgba(0,0,0,.12); }
.reboot { flex: none; height: 70px; width: 188px; background: #7d1433; border-color: #b07d91; font-weight: 700; letter-spacing: -0.06em; }
.dev-actions { display: flex; gap: 15px; height: 69px; }
.dev-bottom { display: flex; height: 270px; gap: 15px; }
.tile { width: 187.500px; height: 270px; background: #084a3b; border: 1.500px solid #5f8a80; border-radius: 23px; color: #cbd5e1; font-weight: 500; display: flex; flex-direction: column; align-items: center; justify-content: center; box-shadow: 0 8px 12px rgba(0,0,0,.12); line-height: 38px; padding-bottom: 1px; }
.tile svg { width: 94px; height: 94px; fill: none; stroke: #cbd5e1; stroke-width: 2; stroke-linecap: round; stroke-linejoin: round; margin: 16px 0 13px; }
.tile .ko { letter-spacing: -0.065em; }
.ring { width: 270px; height: 270px; margin: 8px 0 0 61px; border-radius: 50%; background: conic-gradient(from 180deg, #29b655 75%, #ff4d4d 0); display: flex; align-items: center; justify-content: center; flex: none; }
.ring div { width: 232px; height: 232px; border-radius: 50%; background: #0e1628; display: flex; align-items: center; justify-content: center; font-size: 45px; font-weight: 500; color: #e2e8f0; }
.stats { width: 391px; margin-left: auto; border: 2px solid #1d293a; border-radius: 23px; background: #0e1628; padding: 0 12px; display: flex; gap: 10.500px; box-shadow: 0 8px 12px rgba(0,0,0,.1); }
.stat { flex: 1; display: flex; flex-direction: column; align-items: center; }
.stat h5 { font-size: 33.75px; font-weight: 400; line-height: 40px; margin: 19px 0 6px; color: #e2e8f0; }
.gauge { width: 100%; height: 184px; border: 2px solid #3d4555; border-radius: 23px; position: relative; overflow: hidden; text-align: center; }
.gauge span { display: block; margin-top: 20px; font-size: 33.75px; font-weight: 500; margin-left: -8px; margin-right: -8px; }
.gauge svg { position: absolute; inset: -2px; width: calc(100% + 4px); height: 184px; }
.gauge .line { fill: none; stroke: currentColor; stroke-width: 2.600; vector-effect: non-scaling-stroke; stroke-linejoin: round; }
.gauge .fill { fill: currentColor; opacity: .19; }
.green { color: #23c15e; }
.amber { color: #f59e0b; }

/* device list */
.list-wrap { display: flex; margin-top: 29px; height: 469px; overflow: hidden; padding-left: 14px; }
.list { width: 1229px; padding-top: 28px; display: flex; flex-direction: column; gap: 18.750px; margin-right: 13px; }
.item { height: 97.500px; flex: none; border: 2px solid #263242; border-radius: 32px; background: #0e1628; display: flex; align-items: center; padding-left: 26px; color: #b9c4d3; font-size: 26.25px; }
.dot { width: 26px; height: 26px; border-radius: 50%; background: #10b981; border: 4px solid #1c7661; }
.serial { width: 478px; margin-left: 19px; font-size: 28.5px; font-weight: 600; color: #f1f5f9; }
.mini { width: 34px; height: 34px; border-radius: 50%; background: conic-gradient(from 180deg, #f59e0b var(--p), #1c2838 0); -webkit-mask: radial-gradient(closest-side, transparent 66%, #000 68%); mask: radial-gradient(closest-side, transparent 66%, #000 68%); }
.mini.red { background: conic-gradient(from 180deg, #ef4444 var(--p), #1c2838 0); }
.pct { width: 385px; margin-left: 72px; position: relative; top: -1px; }
.zero { font-size: 22.5px; margin: 17px 0 0 22px; }
.thumb { width: 8px; height: 188px; background: #494d55; }

/* map */
.map { width: 593px; height: 1105px; border-radius: 14px; background: #e2dfda; position: relative; overflow: hidden; }
.tiles { width: 593px; height: 1105px; }
.tiles path, .tiles circle, .tiles ellipse { vector-effect: non-scaling-stroke; }
.sand { fill: #e1dfd1; }
.pink { fill: #e5dcd5; }
.tiles .green { fill: #9bd3b5; }
.green2 { fill: #b3ccb9; }
.green3 { fill: #cfdccb; }
.bldg { fill: #d4d3d2; }
.water { fill: #80deea; }
.r1, .r2, .r3, .r4, .r5, .canal, .bound, .gap, .rail { fill: none; stroke: #fff; stroke-linejoin: round; stroke-linecap: round; }
.r1 { stroke-width: .8; stroke: #ebe9e0; }
.r2 { stroke-width: 2.200; }
.r3 { stroke-width: 4; }
.r4 { stroke-width: 6; }
.r5 { stroke-width: 10; }
.gap { stroke: #dcdad7; stroke-width: .9; }
.canal { stroke: #8fd6de; stroke-width: 1.200; }
.rail { stroke: #ecebe9; stroke-width: 3; stroke-dasharray: 1 1.500; stroke-linecap: butt; }
.bound { stroke: #a5a4a4; stroke-width: .8; }
.rnd, .track { fill: #e2dfda; stroke: #fff; stroke-width: 2.500; }
.r-s { stroke-width: 1; stroke: #ebe9e0; }
.labels text { font: 400 22px "Noto Sans CJK KR", sans-serif; fill: #8f8486; stroke: #fff; stroke-width: 3px; paint-order: stroke; text-anchor: middle; letter-spacing: -0.5px; stroke-linejoin: round; }
.labels .city { font-size: 28px; font-weight: 500; fill: #55504f; stroke: #e2dfda; letter-spacing: -0.3px; }
.zoom { position: absolute; left: 19px; top: 18px; width: 63px; border: 3.750px solid rgba(0,0,0,.25); border-radius: 8px; background-clip: padding-box; }
.zoom span { display: block; height: 56px; background: #fff; color: #000; font: 700 41px/54px "Liberation Sans", sans-serif; text-align: center; border-radius: 0 0 4px 4px; }
.zoom span:first-child { border-bottom: 1.500px solid #ccc; border-radius: 4px 4px 0 0; }
.follow { position: absolute; left: 392px; top: 8px; width: 193px; height: 88px; border: 3.500px solid rgba(0,0,0,.22); border-radius: 8px; padding: 3px 3px 3px 4px; }
.follow button { width: 180px; height: 75px; background: #2563eb; border-radius: 10px; color: #fff; font-size: 26.25px; font-weight: 600; padding-bottom: 2px; }
.attrib { position: absolute; right: 0; bottom: 0; width: 428px; height: 31px; padding-left: 10px; background: rgba(255,255,255,.8); color: #333; font-size: 22.5px; line-height: 29px; white-space: nowrap; }
.attrib a { color: #0078a8; }
.flag { display: inline-block; width: 22px; height: 15px; margin-right: 6px; background: linear-gradient(#4c7be1 50%, #ffd500 50%); vertical-align: -1px; }

/* system navigation bar */
.taskbar { height: 90px; flex: none; background: #fff; display: flex; justify-content: space-between; padding: 0 226px 4px 1026px; }
.dock, .sysnav { display: flex; align-items: center; }
.grid { width: 32px; height: 32px; margin: 6px 41px 0 0; }
.appicon { width: 58px; height: 62px; border-radius: 25px; position: relative; margin: 5px 34px 0 0; }
.appicon svg { width: 100%; height: 62px; }
.play { background: #e6e6e6; width: 60px; margin-right: 33px; }
.web { background: linear-gradient(#6371d9, #6956d8); }
.cam { background: linear-gradient(#cf1c46, #c4034f); margin-right: 30px; }
.set { background: linear-gradient(#365273, #2c3d66); }
.note { background: linear-gradient(#d1361f, #c01f22); margin-right: 0; }
.sep { width: 2px; height: 39px; background: #777; margin: 5px 33px 0 0; }
.badge { position: absolute; right: -10px; top: -6px; width: 28px; height: 28px; border-radius: 50%; background: #f5510f; color: #fff; font-size: 21px; font-weight: 500; line-height: 29px; text-align: center; }
.sysnav svg { height: 30px; margin-top: 4px; }
.recents { width: 30px; margin-right: 164px; }
.home { width: 30px; margin-right: 171px; }
.back { width: 16px; }
```
